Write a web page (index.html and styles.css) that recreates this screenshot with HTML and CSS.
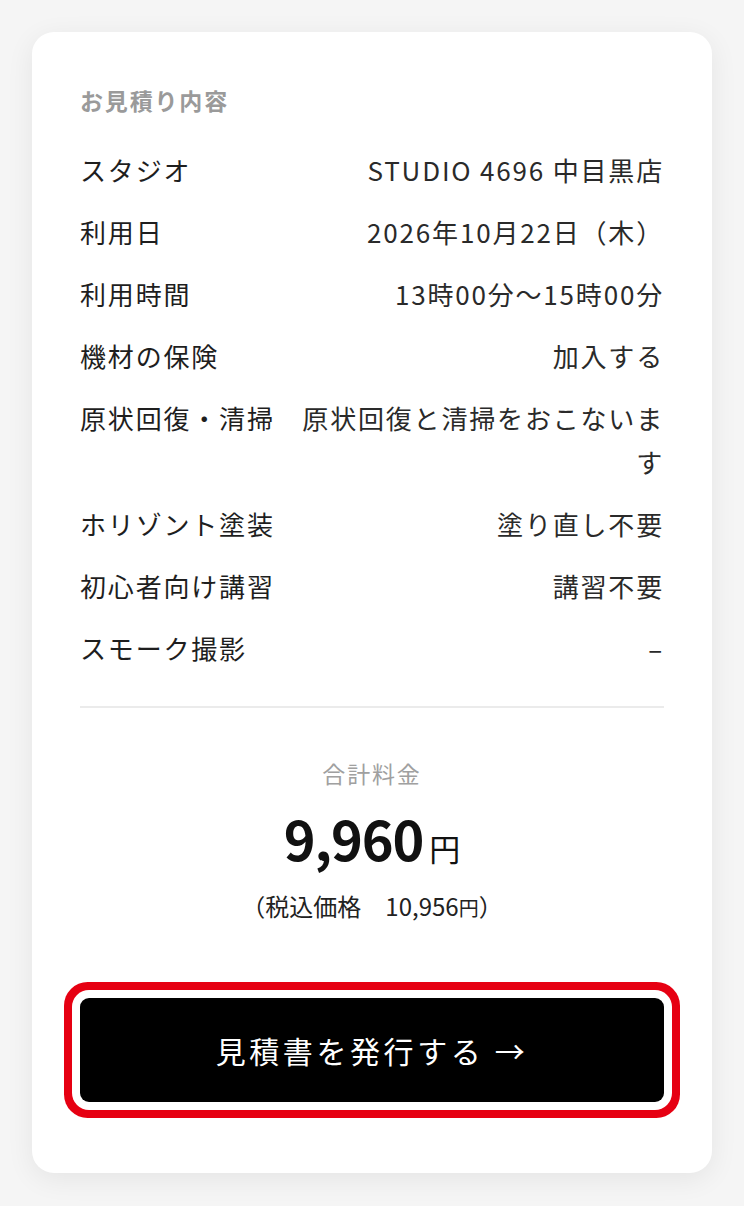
FILE: index.html
```html
<!DOCTYPE html>
<html lang="ja">
<head>
<meta charset="utf-8">
<link rel="stylesheet" href="styles.css">
</head>
<body>
<main class="page">
  <section class="card">
    <h2 class="title">お見積り内容</h2>
    <dl class="rows">
      <div class="row"><dt>スタジオ</dt><dd>STUDIO 4696 中目黒店</dd></div>
      <div class="row"><dt>利用日</dt><dd>2026年10月22日（木）</dd></div>
      <div class="row"><dt>利用時間</dt><dd>13時00分〜15時00分</dd></div>
      <div class="row"><dt>機材の保険</dt><dd>加入する</dd></div>
      <div class="row"><dt>原状回復・清掃</dt><dd>原状回復と清掃をおこないます</dd></div>
      <div class="row"><dt>ホリゾント塗装</dt><dd>塗り直し不要</dd></div>
      <div class="row"><dt>初心者向け講習</dt><dd>講習不要</dd></div>
      <div class="row"><dt>スモーク撮影</dt><dd>–</dd></div>
    </dl>
    <div class="total">
      <p class="total-label">合計料金</p>
      <p class="total-price"><span class="num">9,960</span><span class="yen">円</span></p>
      <p class="total-tax">（税込価格　10,956<span class="yen-s">円</span>）</p>
    </div>
    <div class="btn-wrap">
      <button class="btn" type="button">見積書を発行する →</button>
    </div>
  </section>
</main>
</body>
</html>
```

FILE: styles.css
```css
* { box-sizing: border-box; }
html, body { margin: 0; padding: 0; }
body {
  background: #f5f5f5;
  font-family: "Noto Sans CJK JP", "Noto Sans", sans-serif;
  color: #222;
}
.page {
  padding: 32px 32px 33px;
}
.card {
  background: #fff;
  border-radius: 22px;
  box-shadow: 0 6px 28px rgba(0, 0, 0, 0.07);
  padding: 50px 48px 71px;
}
.title {
  margin: 0 0 21px;
  font-size: 23px;
  font-weight: 700;
  color: #9a9a9a;
  letter-spacing: 0.08em;
  line-height: 36px;
}
.rows {
  margin: 0;
  padding: 0 0 27px;
  border-bottom: 2px solid #ebebeb;
}
.row {
  display: flex;
  justify-content: space-between;
  gap: 24px;
  padding: 9px 0;
  font-size: 26px;
  line-height: 44px;
  letter-spacing: 0.07em;
}
.row dt {
  white-space: nowrap;
  color: #1e1e1e;
}
.row dd {
  margin: 0;
  text-align: right;
  color: #2a2a2a;
}
.total {
  text-align: center;
  padding-top: 48px;
}
.total p { margin: 0; }
.total-label {
  font-size: 23px;
  color: #a0a0a0;
  line-height: 34px;
  letter-spacing: 0.08em;
}
.total-price {
  margin-top: 13px !important;
  height: 70px;
  display: flex;
  justify-content: center;
  align-items: baseline;
  color: #111;
}
.num {
  font-size: 54px;
  line-height: 70px;
  font-weight: 700;
  letter-spacing: -0.02em;
}
.yen {
  font-size: 31px;
  line-height: 70px;
  margin-left: 6px;
}
.total-tax {
  margin-top: 16px !important;
  font-size: 24px;
  line-height: 34px;
  color: #222;
}
.yen-s { font-size: 20px; }
.btn-wrap {
  margin-top: 73px;
}
.btn {
  display: block;
  width: 100%;
  height: 104px;
  border: 0;
  border-radius: 9px;
  background: #000;
  color: #fff;
  font-family: inherit;
  font-size: 30px;
  letter-spacing: 0.12em;
  box-shadow: 0 0 0 8px #fff, 0 0 0 16px #e60012;
}
```
